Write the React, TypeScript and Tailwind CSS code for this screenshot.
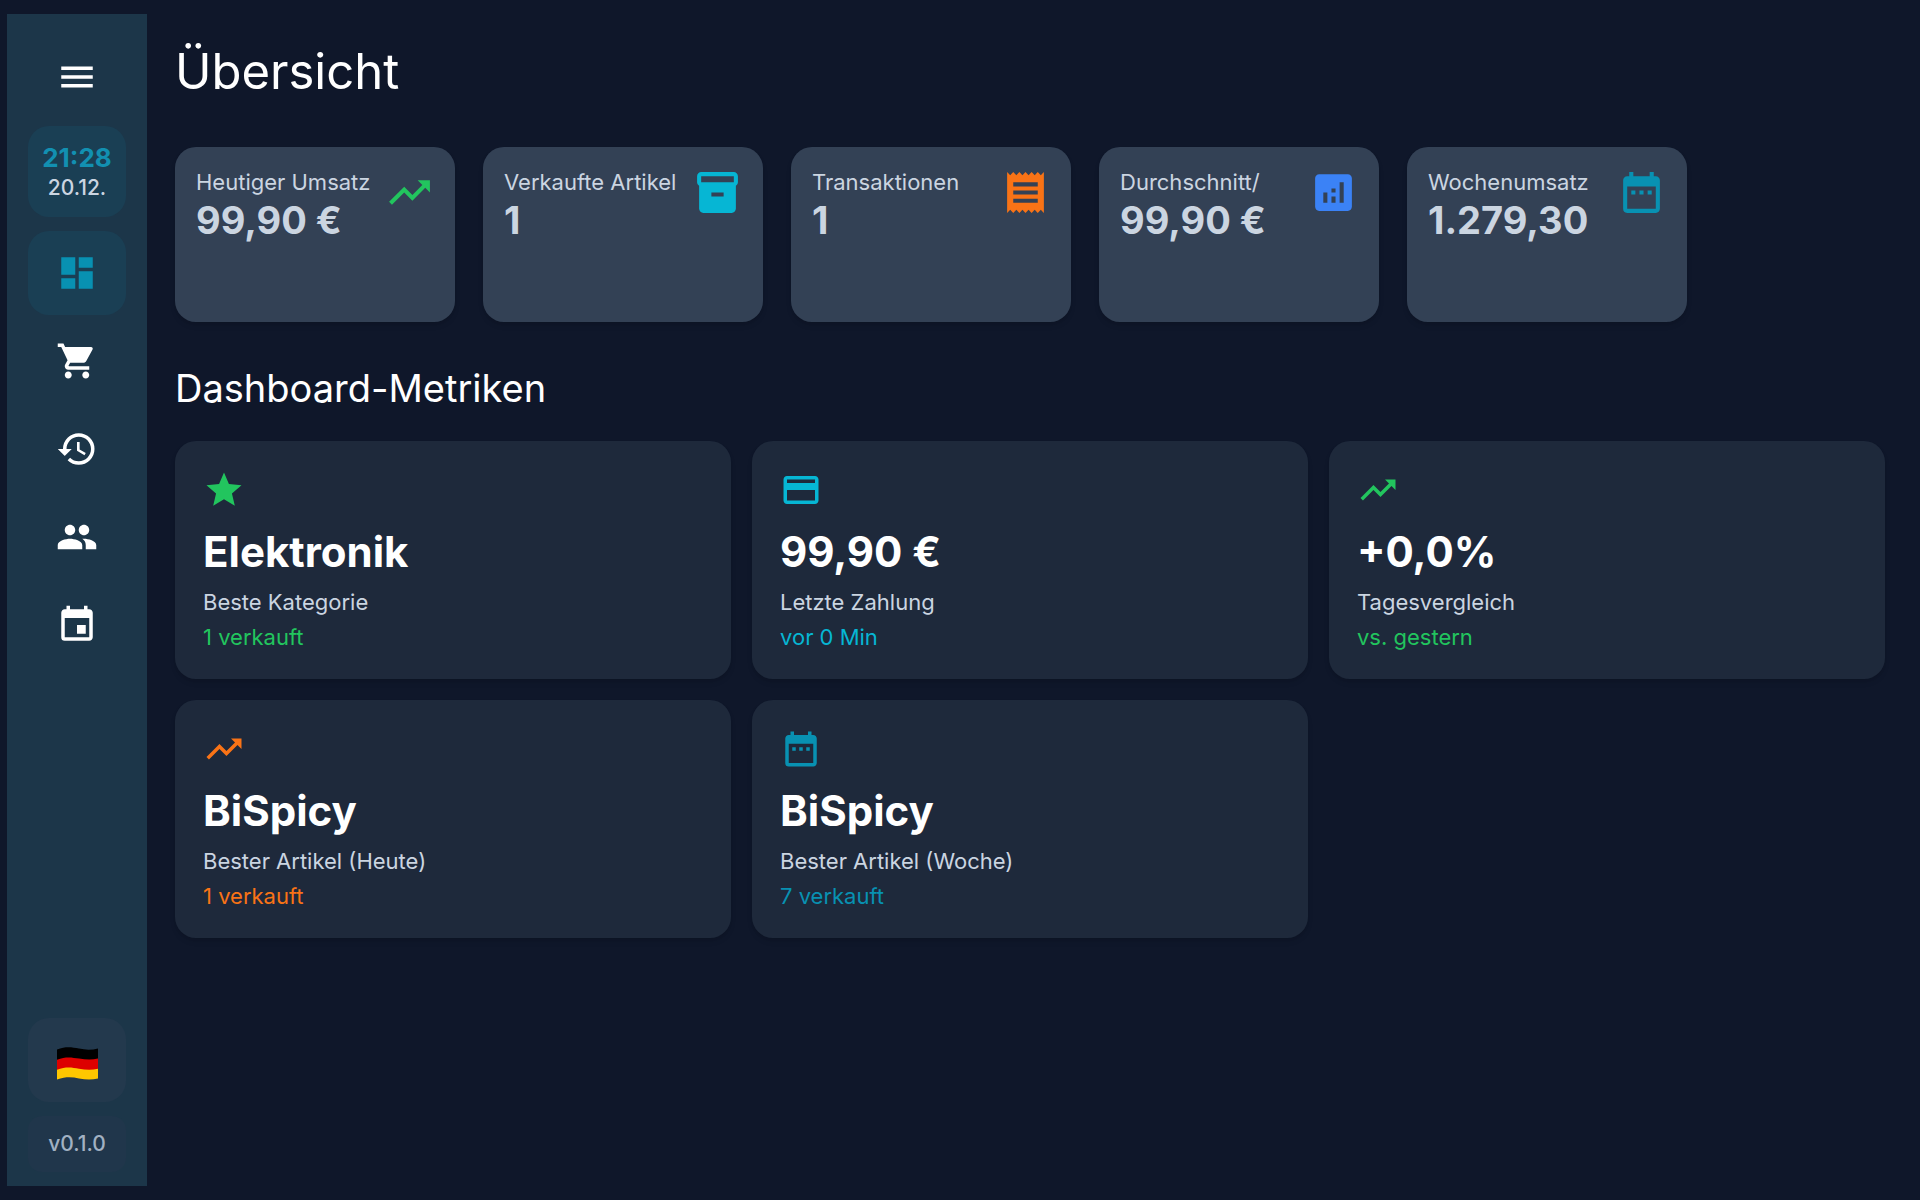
import React, { useState } from 'react';
import type { IconType } from 'react-icons';
import {
  MdAnalytics,
  MdDashboard,
  MdDateRange,
  MdEvent,
  MdHistory,
  MdInventory2,
  MdMenu,
  MdPayment,
  MdPeople,
  MdReceipt,
  MdShoppingCart,
  MdStar,
  MdTrendingUp,
} from 'react-icons/md';

type Stat = { label: string; value: string; icon: IconType; color: string };
type Metric = { title: string; label: string; detail: string; icon: IconType; color: string };

const navItems: { id: string; label: string; icon: IconType }[] = [
  { id: 'dashboard', label: 'Übersicht', icon: MdDashboard },
  { id: 'sales', label: 'Verkauf', icon: MdShoppingCart },
  { id: 'history', label: 'Verlauf', icon: MdHistory },
  { id: 'customers', label: 'Kunden', icon: MdPeople },
  { id: 'calendar', label: 'Kalender', icon: MdEvent },
];

const stats: Stat[] = [
  { label: 'Heutiger Umsatz', value: '99,90 €', icon: MdTrendingUp, color: 'text-[#22c55e]' },
  { label: 'Verkaufte Artikel', value: '1', icon: MdInventory2, color: 'text-[#06b6d4]' },
  { label: 'Transaktionen', value: '1', icon: MdReceipt, color: 'text-[#f97316]' },
  { label: 'Durchschnitt/', value: '99,90 €', icon: MdAnalytics, color: 'text-[#3b82f6]' },
  { label: 'Wochenumsatz', value: '1.279,30', icon: MdDateRange, color: 'text-[#0891b2]' },
];

const metrics: Metric[] = [
  { title: 'Elektronik', label: 'Beste Kategorie', detail: '1 verkauft', icon: MdStar, color: 'text-[#22c55e]' },
  { title: '99,90 €', label: 'Letzte Zahlung', detail: 'vor 0 Min', icon: MdPayment, color: 'text-[#06b6d4]' },
  { title: '+0,0%', label: 'Tagesvergleich', detail: 'vs. gestern', icon: MdTrendingUp, color: 'text-[#22c55e]' },
  { title: 'BiSpicy', label: 'Bester Artikel (Heute)', detail: '1 verkauft', icon: MdTrendingUp, color: 'text-[#f97316]' },
  { title: 'BiSpicy', label: 'Bester Artikel (Woche)', detail: '7 verkauft', icon: MdDateRange, color: 'text-[#0891b2]' },
];

function GermanFlag() {
  return (
    <svg viewBox="0 0 41 33" className="h-[33px] w-[41px]" aria-hidden="true">
      <path d="M0 2.5C9-1 15 .2 22 1.6S35 3 41 1.4V13H0z" fill="#000" />
      <path d="M0 12.7C9 9.2 15 10.4 22 11.6S35 13 41 11.6V23H0z" fill="#dd0000" />
      <path d="M0 22.8C9 19.3 15 20.5 22 21.7S35 23 41 21.7V31.4C35 32.9 29 32.8 22 31.4S9 29.4 0 32.6z" fill="#ffc700" />
    </svg>
  );
}

function Sidebar() {
  const [active, setActive] = useState('dashboard');

  return (
    <aside className="flex w-[140px] shrink-0 flex-col items-center bg-[#1c3649] pt-[21px] pb-[14px]">
      <button type="button" aria-label="Menü" className="flex h-[84px] w-[98px] items-center justify-center text-white">
        <MdMenu size={42} />
      </button>

      <div className="mt-[7px] mb-[14px] flex h-[91px] w-[98px] flex-col items-center justify-center rounded-[21px] bg-[#1a3f54]">
        <span className="text-[26px] leading-[32px] font-bold text-[#1290b1]">21:28</span>
        <span className="text-[21px] leading-[28px] font-medium text-[#cbd5e1]">20.12.</span>
      </div>

      <nav className="flex flex-col gap-1">
        {navItems.map(({ id, label, icon: Icon }) => (
          <button
            key={id}
            type="button"
            aria-label={label}
            onClick={() => setActive(id)}
            className={`flex h-[84px] w-[98px] items-center justify-center rounded-[21px] ${
              active === id ? 'bg-[#1a3f54] text-[#0891b2]' : 'text-white'
            }`}
          >
            <Icon size={42} />
          </button>
        ))}
      </nav>

      <div className="mt-auto flex flex-col gap-[14px]">
        <button
          type="button"
          aria-label="Sprache: Deutsch"
          className="flex h-[84px] w-[98px] items-center justify-center rounded-[21px] bg-[#23394d] pt-[7px]"
        >
          <GermanFlag />
        </button>
        <div className="flex h-[56px] w-[98px] items-center justify-center rounded-[14px] bg-[#20364b] text-[21px] leading-[28px] font-medium text-[#a1b1c2]">
          v0.1.0
        </div>
      </div>
    </aside>
  );
}

function StatCard({ label, value, icon: Icon, color }: Stat) {
  return (
    <div className="flex h-[175px] w-[280px] items-start justify-between rounded-[21px] bg-[#334155] p-[21px] text-[#cbd5e1] shadow-md">
      <div className="min-w-0 whitespace-nowrap">
        <p className="text-[22px] leading-[28px]">{label}</p>
        <p className="text-[38px] leading-[48px] font-bold">{value}</p>
      </div>
      <Icon size={49} className={`shrink-0 ${color}`} />
    </div>
  );
}

function MetricCard({ title, label, detail, icon: Icon, color }: Metric) {
  return (
    <div className="rounded-[21px] bg-[#1e293b] p-[28px] shadow-md">
      <Icon size={42} className={color} />
      <p className="mt-[14px] text-[42px] leading-[54px] font-bold text-white">{title}</p>
      <p className="mt-[9px] text-[22px] leading-[28px] text-[#cbd5e1]">{label}</p>
      <p className={`mt-[7px] text-[22px] leading-[28px] ${color}`}>{detail}</p>
    </div>
  );
}

export default function App() {
  return (
    <div className="flex min-h-screen bg-[#0f172a] py-[14px] pl-[7px] font-['Inter',sans-serif]">
      <Sidebar />
      <main className="min-w-0 flex-1 pt-[28px] pr-[35px] pl-[28px]">
        <h1 className="text-[49px] leading-[60px] text-white">Übersicht</h1>
        <section className="mt-[45px] flex flex-wrap gap-[28px]">
          {stats.map((stat) => (
            <StatCard key={stat.label} {...stat} />
          ))}
        </section>
        <h2 className="mt-[42px] text-[38px] leading-[48px] text-white">Dashboard-Metriken</h2>
        <section className="mt-[29px] grid grid-cols-3 gap-[21px]">
          {metrics.map((metric) => (
            <MetricCard key={metric.label} {...metric} />
          ))}
        </section>
      </main>
    </div>
  );
}
